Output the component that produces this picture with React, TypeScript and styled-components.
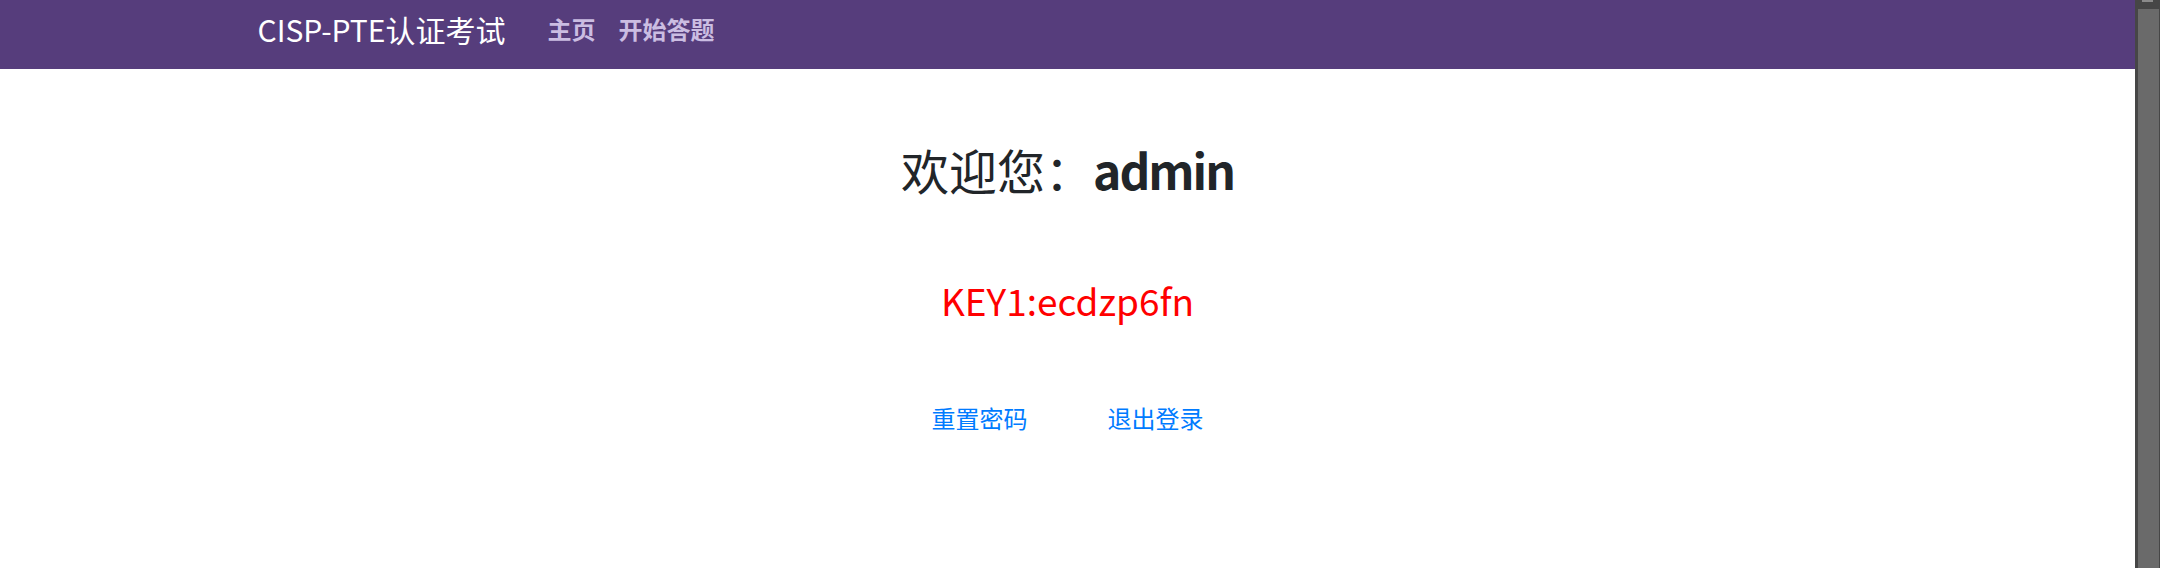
import React from "react";
import styled, { createGlobalStyle } from "styled-components";

const GlobalStyle = createGlobalStyle`
  html, body {
    margin: 0;
    padding: 0;
    height: 100%;
    background: #ffffff;
    overflow: hidden;
  }
  body {
    font-family: "Noto Sans CJK SC", "Noto Sans", sans-serif;
    color: #212529;
  }
  #root {
    height: 100%;
  }
`;

const Frame = styled.div`
  display: flex;
  width: 2160px;
  height: 568px;
`;

const Page = styled.div`
  flex: 1;
  display: flex;
  flex-direction: column;
  min-width: 0;
`;

const Navbar = styled.header`
  height: 69px;
  box-sizing: border-box;
  padding-bottom: 11px;
  background: #563d7c;
  display: flex;
  align-items: center;
`;

const NavContainer = styled.div`
  width: 1620px;
  margin: 0 auto;
  display: flex;
  align-items: center;
`;

const Brand = styled.a`
  font-size: 30px;
  line-height: 1.2;
  color: #ffffff;
  text-decoration: none;
  white-space: nowrap;
  margin-right: 42px;
`;

const NavList = styled.nav`
  display: flex;
  align-items: center;
  gap: 23px;
`;

const NavLink = styled.a`
  font-size: 24px;
  line-height: 1.2;
  font-weight: 700;
  color: #cbbde2;
  text-decoration: none;
`;

const Main = styled.main`
  display: flex;
  flex-direction: column;
  align-items: center;
  padding-top: 72px;
`;

const Heading = styled.h2`
  margin: 0;
  font-size: 48px;
  font-weight: 400;
  line-height: 1.2;
  color: #212529;
`;

const User = styled.b`
  font-weight: 700;
  letter-spacing: -2px;
`;

const Key = styled.p`
  margin: 71px 0 0;
  font-size: 37px;
  line-height: 60px;
  color: #ff0000;
`;

const Links = styled.div`
  margin-top: 70px;
  display: flex;
  gap: 80px;
  line-height: 1.5;
`;

const ActionLink = styled.a`
  font-size: 24px;
  color: #007bff;
  text-decoration: none;
`;

const Scrollbar = styled.div`
  width: 25px;
  background: #464646;
  display: flex;
  flex-direction: column;
  align-items: center;
`;

const ArrowStub = styled.div`
  width: 11px;
  height: 2px;
  background: #8a8a8a;
`;

const Thumb = styled.div`
  flex: 1;
  width: 21px;
  margin-top: 7px;
  margin-left: 1px;
  background: #6a6a6a;
`;

export default function App() {
  return (
    <>
      <GlobalStyle />
      <Frame>
        <Page>
          <Navbar>
            <NavContainer>
              <Brand href="#">CISP-PTE认证考试</Brand>
              <NavList>
                <NavLink href="#">主页</NavLink>
                <NavLink href="#">开始答题</NavLink>
              </NavList>
            </NavContainer>
          </Navbar>
          <Main>
            <Heading>
              欢迎您：<User>admin</User>
            </Heading>
            <Key>KEY1:ecdzp6fn</Key>
            <Links>
              <ActionLink href="#">重置密码</ActionLink>
              <ActionLink href="#">退出登录</ActionLink>
            </Links>
          </Main>
        </Page>
        <Scrollbar>
          <ArrowStub />
          <Thumb />
        </Scrollbar>
      </Frame>
    </>
  );
}
